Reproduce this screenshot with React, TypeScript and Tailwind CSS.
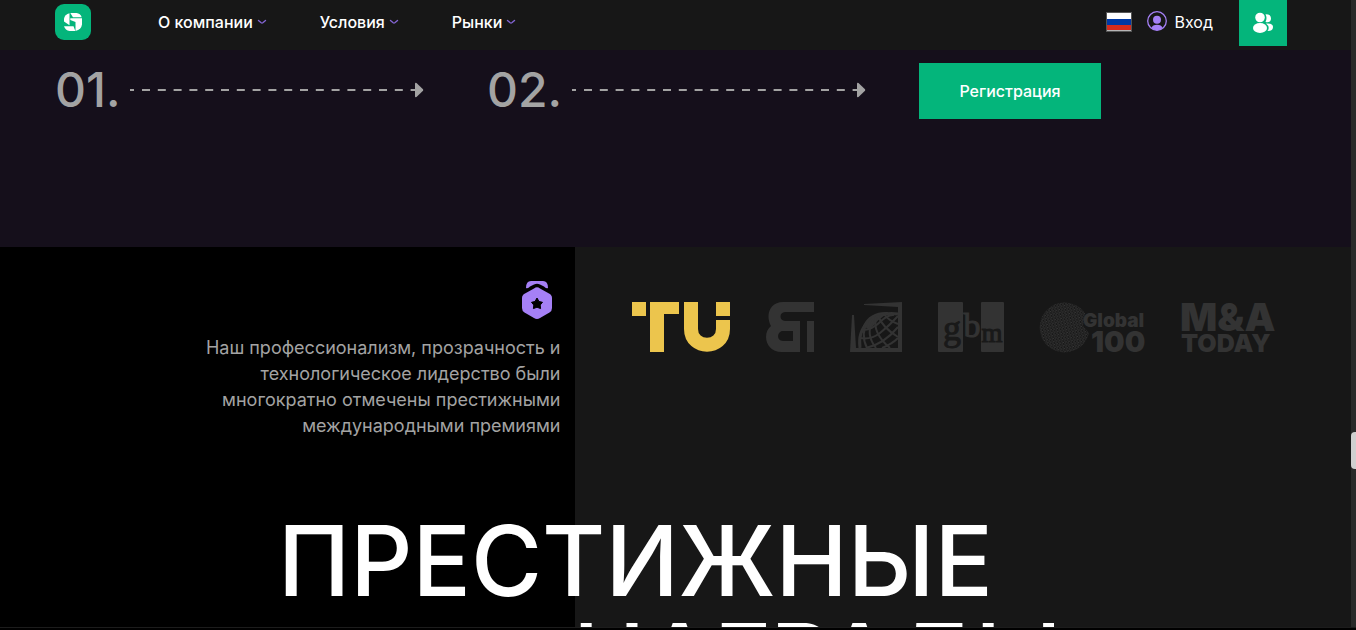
const NAV_ITEMS = ['О компании', 'Условия', 'Рынки']

const Chevron = () => (
  <svg width="10" height="6" viewBox="0 0 10 6" fill="none" aria-hidden="true">
    <path d="M1.500 1.500L4.200 3.800Q5 4.400 5.800 3.800L8.500 1.500" stroke="#8465d4" strokeWidth="1.400" strokeLinecap="round" />
  </svg>
)

const Logo = () => (
  <svg width="36" height="36" viewBox="0 0 36 36" aria-hidden="true">
    <rect width="36" height="36" rx="9" fill="#04b57b" />
    <g fill="#fff">
      <path d="M15.300 9H21.500Q25.500 9.500 26.700 13.300H18Z" />
      <path d="M14.500 9.300V21.300L9 17.500V14.500Q9.800 10.500 14.500 9.300Z" />
      <path d="M9 22.300H18.500L20.300 27H14.500Q10.300 26.500 9 22.300Z" />
      <path d="M15.300 14.200H27V20.500Q26.300 25.500 20.500 27V18L15.300 16Z" />
    </g>
  </svg>
)

const Header = () => {
  return (
    <header className="h-[50px] shrink-0 bg-[#171717] pl-[55px] pr-16 flex items-start text-base leading-6">
      <a href="#home" aria-label="На главную" className="mt-1">
        <Logo />
      </a>

      {/* Navigation */}
      <nav className="ml-[67px] mt-2.5 flex gap-[53px]">
        {NAV_ITEMS.map((item) => (
          <button key={item} type="button" className="flex items-center gap-1 font-medium text-white">
            {item}
            <Chevron />
          </button>
        ))}
      </nav>

      {/* Language & login */}
      <div className="ml-auto flex items-start">
        <button type="button" aria-label="Русский" className="mt-3">
          <svg width="26" height="20" viewBox="0 0 26 20" aria-hidden="true">
            <rect x=".5" y=".5" width="25" height="19" fill="#b5b5b5" stroke="#555" />
            <path fill="#fff" d="M1 1h24v6H1z" />
            <path fill="#0039a6" d="M1 7h24v6H1z" />
            <path fill="#d52b1e" d="M1 13h24v5H1z" />
          </svg>
        </button>
        <a href="#login" className="ml-[15px] mt-2.5 flex gap-2 text-white">
          <svg width="20" height="22" viewBox="0 0 20 22" fill="#a580f6" aria-hidden="true">
            <circle cx="10" cy="11" r="9.300" fill="none" stroke="#a580f6" strokeWidth="1.300" />
            <circle cx="10" cy="9.800" r="4" />
            <path d="M4.500 18Q5.500 14.700 10 14.700T15.500 18Q13.500 20.300 10 20.300T4.500 18Z" />
          </svg>
          Вход
        </a>
        <button type="button" aria-label="Партнёрам" className="ml-[26px] flex h-[46px] w-12 items-center justify-center bg-[#04b57b]">
          <svg width="22" height="22" viewBox="0 0 22 22" fill="#fff" aria-hidden="true">
            <circle cx="8" cy="5.500" r="4.800" />
            <ellipse cx="8" cy="16" rx="7" ry="5" />
            <path d="M13.500 2.200Q19 2 19 6.500T13.500 10Q15.500 6 13.500 2.200Z" />
            <path d="M14 11.500Q21 11 21 15T15.500 19Q18.500 15 14 11.500Z" />
          </svg>
        </button>
      </div>
    </header>
  )
}

const Arrow = () => (
  <svg width="294" height="16" viewBox="0 0 294 16" aria-hidden="true">
    <path d="M0 8H4M12 8H286" stroke="#a3a3a3" strokeWidth="2" strokeDasharray="8 7.800" />
    <path d="M285 1.500Q285 .5 286.500 1L293 7.200Q293.500 8 293 8.800L286.500 15Q285 15.500 285 14.500Z" fill="#a3a3a3" />
  </svg>
)

const Steps = () => {
  return (
    <section className="h-[197px] shrink-0 bg-[#150f1b] pl-[55px] pt-[13px]">
      <ol className="grid grid-cols-3 items-start">
        {['01.', '02.'].map((step) => (
          <li key={step} className="flex items-center gap-2.5 text-5xl leading-[54px] font-medium text-[#a3a3a3]">
            {step}
            <Arrow />
          </li>
        ))}
        <li>
          <button type="button" className="h-14 w-[182px] bg-[#04b57b] text-base font-medium text-white">
            Регистрация
          </button>
        </li>
      </ol>
    </section>
  )
}

const Medal = () => (
  <svg width="32" height="40" viewBox="0 0 32 40" aria-hidden="true">
    <path d="M5 8Q5 1 10 1H22Q27 1 27 8Q25 9 23 6.500L19 4.500Q16 3 13 4.500L9 6.500Q7 9 5 8Z" fill="#a580f6" />
    <path d="M13 8.500Q16 6 19 8.500L28 13.500Q31 15 31 18V28Q31 31 28.500 32.500L19 38Q16 40 13 38L3.500 32.500Q1 31 1 28V18Q1 15 4 13.500Z" fill="#a580f6" />
    <path d="M16 18L18 21.500L21.500 22.300L19.200 25L19.600 28.600L16 27.200L12.400 28.600L12.800 25L10.500 22.300L14 21.500Z" fill="#000" stroke="#000" strokeWidth="1" strokeLinejoin="round" />
  </svg>
)

const AwardTU = () => (
  <svg width="98" height="50" viewBox="0 0 98 50" fill="#ecc54d" role="img" aria-label="TU">
    <rect width="14" height="14" />
    <rect x="18" width="29" height="12" />
    <rect x="18" width="14" height="50" />
    <rect x="84" width="14" height="14" />
    <path d="M59 0V27C59 48 91 48 91 27V18" fill="none" stroke="#ecc54d" strokeWidth="14" />
  </svg>
)

const AwardBi = () => (
  <svg width="48" height="50" viewBox="0 0 48 50" fill="#333" role="img" aria-label="BI">
    <path
      fillRule="evenodd"
      d="M48 0V10H19C13 10 13 19 19 19H34V50H16C-1 50-4 31 5 24C-1 13 4 0 17 0ZM27 29H17C11 29 10 39 17 39H27Z"
    />
    <rect x="41" y="19" width="7" height="31" />
  </svg>
)

const AwardGlobe = () => (
  <svg width="52" height="50" viewBox="0 0 52 50" fill="none" role="img" aria-label="Finance">
    <path d="M14 2L52 0V50H0L2 13H4L6 46H48V5L14 3Z" fill="#333" />
    <g stroke="#333" strokeWidth="2">
      <path d="M10 46C7 25 22 9 48 12" strokeWidth="3" />
      <path d="M14 24Q20 11 36 11L27 18L20 26Z" fill="#333" />
      <path d="M17 46Q10 32 18 19M26 46Q15 32 23 18M40 46Q22 31 26 15M48 35Q33 26 28 14M48 22Q39 19 34 12" />
      <path d="M10 36Q21 38 30 31T48 14M16 46Q34 42 48 25M32 46Q42 42 48 36M12 28Q22 28 30 20T44 13" />
    </g>
  </svg>
)

const AwardGbm = () => (
  <svg width="66" height="50" viewBox="0 0 66 50" role="img" aria-label="gbm">
    <rect width="25" height="50" rx="1" fill="#333" />
    <rect x="43" width="23" height="50" rx="1" fill="#333" />
    <g fontFamily="'Liberation Serif', serif" textAnchor="middle" strokeWidth="1">
      <text x="14" y="38" fontSize="36" fill="#191919" stroke="#191919">g</text>
      <text x="34" y="35" fontSize="34" fill="#333" stroke="#333">b</text>
      <text x="54" y="40" fontSize="27" fill="#191919" stroke="#191919">m</text>
    </g>
  </svg>
)

const AwardGlobal = () => (
  <svg width="106" height="50" viewBox="0 0 106 50" className="overflow-visible" role="img" aria-label="Global 100">
    <defs>
      <pattern id="dots" width="3" height="3" patternUnits="userSpaceOnUse" patternTransform="rotate(-12)">
        <path d="M0 1H2M1.500 2.500H3" stroke="#393939" strokeWidth="1" />
      </pattern>
    </defs>
    <path d="M45 11A25 25 0 1 0 49 31L43 24Z" fill="url(#dots)" />
    <g fill="#333" fontFamily="Inter, sans-serif" fontWeight="900">
      <text x="43" y="25" fontSize="19">Global</text>
      <text x="51" y="50" fontSize="29">100</text>
    </g>
  </svg>
)

const AwardMa = () => (
  <svg width="96" height="50" viewBox="0 0 96 50" className="overflow-visible" role="img" aria-label="M&A Today">
    <g fill="#333" fontFamily="Inter, sans-serif" fontWeight="900">
      <text x="-2" y="29" fontSize="39">M&amp;A</text>
      <text x="-1" y="50" fontSize="25">TODAY</text>
    </g>
  </svg>
)

const Awards = () => {
  return (
    <section className="bg-[linear-gradient(90deg,#000_calc(50%-101px),#171717_0)]">
      <div className="grid grid-cols-[calc(50%-101px)_1fr]">
        <div className="flex flex-col items-end pr-3.5 pt-[33px]">
          <div className="mr-2">
            <Medal />
          </div>
          <p className="mt-[15px] w-[380px] text-right text-lg leading-[26px] text-[#a3a3a3]">
            Наш профессионализм, прозрачность и технологическое лидерство были многократно отмечены престижными
            международными премиями
          </p>
        </div>

        {/* Award logos */}
        <div className="flex items-start gap-9 pl-[57px] pt-[55px]">
          <AwardTU />
          <AwardBi />
          <AwardGlobe />
          <AwardGbm />
          <AwardGlobal />
          <AwardMa />
        </div>
      </div>

      <h2 className="mt-[73px] pl-[278px] text-[97px] leading-[98px] font-medium uppercase whitespace-nowrap text-white">
        Престижные
        <span className="block pl-[295px]">награды</span>
      </h2>
    </section>
  )
}

const App = () => {
  return (
    <div className="flex h-screen flex-col bg-black font-[Inter,sans-serif]">
      <div className="flex min-h-0 flex-1 overflow-hidden">
        <main className="flex min-w-0 flex-1 flex-col">
          <Header />
          <Steps />
          <Awards />
        </main>

        {/* Scroll track */}
        <div className="w-[5px] shrink-0 bg-[#2a2a2a] pt-[432px]">
          <div className="h-[37px] rounded-l-sm bg-[#cfcfcf]" />
        </div>
      </div>
      <div className="h-[3px] shrink-0 border-t border-[#1c1c1c] bg-black" />
    </div>
  )
}

export default App
